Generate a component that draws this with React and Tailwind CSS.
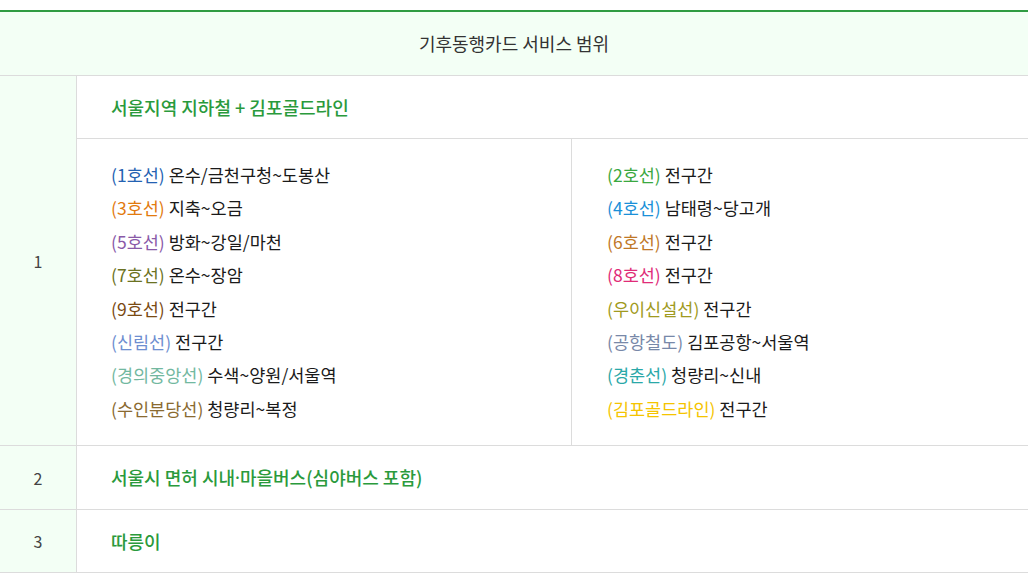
import React from "react";

const left = [
  ["(1호선)", "온수/금천구청~도봉산", "text-[#2462b2]"],
  ["(3호선)", "지축~오금", "text-[#e27a0e]"],
  ["(5호선)", "방화~강일/마천", "text-[#8a5aa8]"],
  ["(7호선)", "온수~장암", "text-[#6b7222]"],
  ["(9호선)", "전구간", "text-[#7a4a12]"],
  ["(신림선)", "전구간", "text-[#6e8ed0]"],
  ["(경의중앙선)", "수색~양원/서울역", "text-[#72b8a0]"],
  ["(수인분당선)", "청량리~복정", "text-[#8a6a30]"],
];

const right = [
  ["(2호선)", "전구간", "text-[#3aa840]"],
  ["(4호선)", "남태령~당고개", "text-[#1a90d8]"],
  ["(6호선)", "전구간", "text-[#c07828]"],
  ["(8호선)", "전구간", "text-[#e02c78]"],
  ["(우이신설선)", "전구간", "text-[#a09a20]"],
  ["(공항철도)", "김포공항~서울역", "text-[#7888a8]"],
  ["(경춘선)", "청량리~신내", "text-[#2aa8a8]"],
  ["(김포골드라인)", "전구간", "text-[#f5c400]"],
];

function Lines({ items }) {
  return (
    <ul className="pt-[19px] pb-[20px] leading-[33.4px] text-[17.5px]">
      {items.map(([name, range, color]) => (
        <li key={name}>
          <span className={color}>{name}</span> {range}
        </li>
      ))}
    </ul>
  );
}

function NumCell({ n }) {
  return (
    <div className="w-[77px] shrink-0 bg-[#f3fff5] border-r border-[#dcdcdc] flex items-center justify-center text-[16px] text-[#444]">
      {n}
    </div>
  );
}

export default function App() {
  return (
    <div
      className="pt-[10px] bg-white text-[18px] text-[#1a1a1a]"
      style={{ fontFamily: '"Noto Sans CJK KR", "Noto Sans", sans-serif' }}
    >
      <div className="border-t-2 border-[#2f9c42]">
        <div className="h-[64px] bg-[#f3fff5] border-b border-[#dcdcdc] flex items-center justify-center text-[#333]">
          기후동행카드 서비스 범위
        </div>

        <div className="flex border-b border-[#dcdcdc]">
          <NumCell n="1" />
          <div className="flex-1 flex flex-col">
            <div className="h-[63px] border-b border-[#dcdcdc] flex items-center pl-[34px] font-medium text-[#2a9a3c]">
              서울지역 지하철 + 김포골드라인
            </div>
            <div className="grid grid-cols-[495px_1fr]">
              <div className="border-r border-[#dcdcdc] pl-[34px]">
                <Lines items={left} />
              </div>
              <div className="pl-[35px]">
                <Lines items={right} />
              </div>
            </div>
          </div>
        </div>

        <div className="flex h-[64px] border-b border-[#dcdcdc]">
          <NumCell n="2" />
          <div className="flex-1 flex items-center pl-[34px] font-medium text-[#2a9a3c]">
            서울시 면허 시내<span className="font-['Noto_Sans']">·</span>마을버스(심야버스 포함)
          </div>
        </div>

        <div className="flex h-[63px] border-b border-[#dcdcdc]">
          <NumCell n="3" />
          <div className="flex-1 flex items-center pl-[34px] font-medium text-[#2a9a3c]">
            따릉이
          </div>
        </div>
      </div>
    </div>
  );
}
